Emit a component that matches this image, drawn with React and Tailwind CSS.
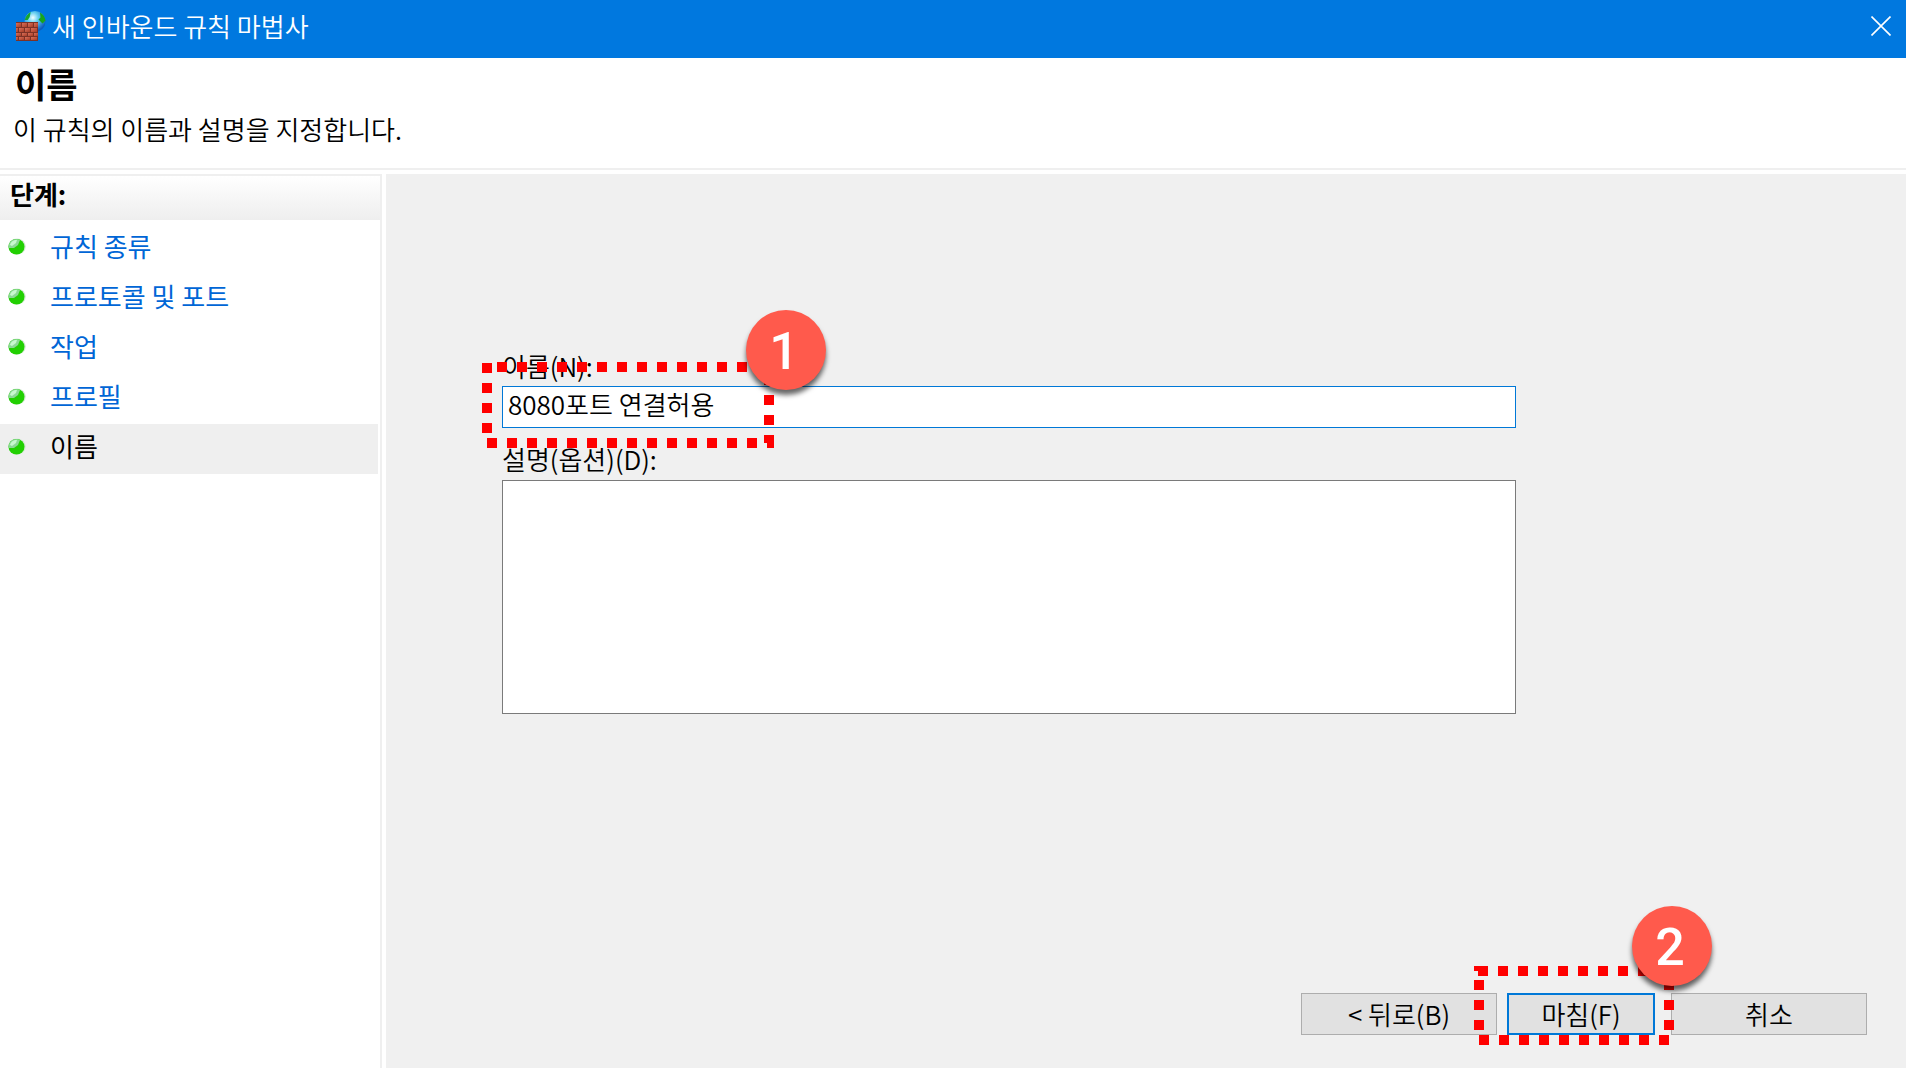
const steps = ['규칙 종류', '프로토콜 및 포트', '작업', '프로필', '이름'];

function FirewallIcon() {
  return (
    <svg className="h-[30px] w-[30px] shrink-0" viewBox="0 0 30 30" aria-hidden="true">
      <defs>
        <radialGradient id="globe" cx="40%" cy="32%" r="65%">
          <stop offset="0" stopColor="#f2ffff" />
          <stop offset="0.4" stopColor="#62cdf0" />
          <stop offset="1" stopColor="#0b5cc0" />
        </radialGradient>
        <linearGradient id="brick" x1="0" y1="0" x2="1" y2="1">
          <stop offset="0" stopColor="#d9705a" />
          <stop offset="1" stopColor="#a63c26" />
        </linearGradient>
      </defs>
      <circle cx="19" cy="10.5" r="10.5" fill="url(#globe)" />
      <path d="M8.700 9c1-4 3-6 6-8l-1 5-2 3z" fill="#18a52c" />
      <path d="M24 1.500c3 1.500 5 4.500 5.500 8l-3 3-4-4 2-2z" fill="#17a51d" />
      <rect x="0" y="11" width="22" height="19" fill="#7d3226" />
      <g fill="url(#brick)">
        <rect x="0" y="12" width="5" height="4" /><rect x="6" y="12" width="5" height="4" />
        <rect x="12" y="12" width="5" height="4" /><rect x="18" y="12" width="4" height="4" />
        <rect x="0" y="17" width="2" height="4" /><rect x="3" y="17" width="5" height="4" />
        <rect x="9" y="17" width="5" height="4" /><rect x="15" y="17" width="6" height="4" />
        <rect x="0" y="22" width="5" height="3" /><rect x="6" y="22" width="5" height="3" />
        <rect x="12" y="22" width="5" height="3" /><rect x="18" y="22" width="4" height="3" />
        <rect x="0" y="26" width="2" height="3" /><rect x="3" y="26" width="5" height="3" />
        <rect x="9" y="26" width="5" height="3" /><rect x="15" y="26" width="6" height="3" />
      </g>
    </svg>
  );
}

function Bullet() {
  return (
    <svg className="h-[17px] w-[18px] shrink-0" viewBox="0 0 18 17" aria-hidden="true">
      <ellipse cx="9" cy="8.5" rx="8.8" ry="8" fill="#d5e8d5" />
      <ellipse cx="8.5" cy="8.8" rx="8" ry="7.8" fill="#22d002" />
      <path d="M0.6 10C0.4 4 4 1 9 1l3 1-2 5-4 3z" fill="#8bd795" />
      <path d="M2 7C3 3.500 5 2 9 2L8 5 4 8z" fill="#c8f7cf" />
    </svg>
  );
}

function Marker({ children, className }) {
  return (
    <span
      className={`absolute z-20 flex h-20 w-20 items-center justify-center rounded-full bg-[#ff5a4c] pt-1 pr-1 font-[Roboto,sans-serif] text-[52px] leading-none font-medium text-white shadow-[0_5px_5px_rgba(0,0,0,0.6)] ${className}`}
    >
      {children}
    </span>
  );
}

export default function App() {
  return (
    <div className="flex min-h-screen flex-col bg-white font-['Noto_Sans_CJK_KR',sans-serif] text-[26px] leading-8 font-[350] text-black">
      <header className="flex h-[58px] items-center bg-[#0078df] pr-[13px] pb-[6px] pl-4 text-white">
        <FirewallIcon />
        <span className="ml-[6px] grow">새 인바운드 규칙 마법사</span>
        <button type="button" aria-label="닫기" className="flex h-6 w-6 items-center justify-center">
          <svg className="h-5 w-5" viewBox="0 0 20 20" stroke="white" strokeWidth="1.6" aria-hidden="true">
            <path d="M0.500 0.500l19 19M19.500 0.500l-19 19" />
          </svg>
        </button>
      </header>

      <div className="h-28 border-b-2 border-[#efefef] pt-[6px]">
        <h1 className="pl-[15px] text-[34px] leading-10 font-bold">이름</h1>
        <p className="pt-[9px] pl-[13px]">이 규칙의 이름과 설명을 지정합니다.</p>
      </div>

      <div className="flex grow gap-1 pt-1">
        <nav aria-labelledby="steps" className="w-[382px] shrink-0 border-t-2 border-r-2 border-[#efefef]">
          <h2 id="steps" className="h-11 bg-linear-to-b from-white to-[#eeeeee] pt-[2px] pl-[10px] leading-8 font-bold">
            단계:
          </h2>
          <ol className="pt-1 pr-[2px] font-normal">
            {steps.map((step, i) => {
              const current = i === steps.length - 1;
              return (
                <li
                  key={step}
                  aria-current={current ? 'step' : undefined}
                  className={`flex h-[50px] items-center gap-6 pb-[6px] pl-2 ${current ? 'bg-[#efefef]' : ''}`}
                >
                  <Bullet />
                  {current ? <span>{step}</span> : <a href="#" className="text-[#0066d6]">{step}</a>}
                </li>
              );
            })}
          </ol>
        </nav>

        <main className="flex grow flex-col bg-[#f0f0f0] pt-[176px] pr-[39px] pb-[33px] pl-[116px]">
          <div className="mr-[351px] flex flex-col">
            <label htmlFor="name" className="h-9">이름(N):</label>
            <div className="relative">
              <input
                id="name"
                type="text"
                defaultValue="8080포트 연결허용"
                className="block h-[42px] w-full border border-[#0078d7] bg-white pb-2 pl-[5px] outline-none"
              />
              <svg
                className="pointer-events-none absolute -top-6 -left-5 z-10 h-[86px] w-[292px]"
                viewBox="0 0 292 86"
                fill="none"
                stroke="#ff0000"
                strokeWidth="10"
                aria-hidden="true"
              >
                <path d="M5 5H287V81H5V0" strokeDasharray="10 10" strokeDashoffset="10" />
              </svg>
              <Marker className="-top-[76px] left-[244px]">1</Marker>
            </div>
            <label htmlFor="description" className="mt-[15px] h-[37px]">설명(옵션)(D):</label>
            <textarea
              id="description"
              className="block h-[234px] w-full resize-none border border-[#7a7a7a] bg-white px-[5px] outline-none"
            />
          </div>

          <div className="mt-auto flex justify-end">
            <button type="button" className="h-[42px] w-[196px] border border-[#adadad] bg-[#e1e1e1]">
              &lt; 뒤로(B)
            </button>
            <div className="relative mr-4 ml-[10px]">
              <button type="button" className="h-[42px] w-[148px] border-2 border-[#0078d7] bg-[#e1e1e1]">
                마침(F)
              </button>
              <svg
                className="pointer-events-none absolute -top-[27px] -left-[33px] z-10 h-[79px] w-[200px]"
                viewBox="0 0 200 79"
                fill="none"
                stroke="#ff0000"
                strokeWidth="10"
                aria-hidden="true"
              >
                <path d="M4 5H195V74H5V5" strokeDasharray="10 10" />
                <path d="M0 2.500H5" strokeWidth="5" />
              </svg>
              <Marker className="-top-[87px] left-[125px]">2</Marker>
            </div>
            <button type="button" className="h-[42px] w-[196px] border border-[#adadad] bg-[#e1e1e1]">
              취소
            </button>
          </div>
        </main>
      </div>
    </div>
  );
}
